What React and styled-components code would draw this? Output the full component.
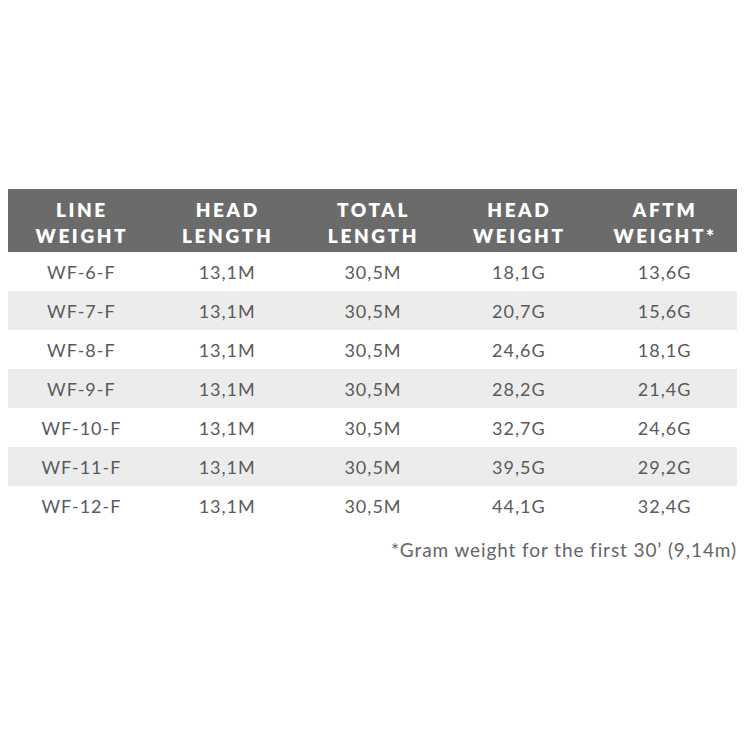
import React from "react";
import styled, { createGlobalStyle } from "styled-components";

const Global = createGlobalStyle`
  html, body { margin: 0; padding: 0; background: #fff; }
  body { font-family: Lato, "Open Sans", sans-serif; }
`;

const Page = styled.div`
  width: 750px;
  height: 750px;
  padding: 189px 0 0 8px;
  box-sizing: border-box;
`;

const Table = styled.div`
  width: 729px;
  display: grid;
  grid-template-columns: repeat(5, 1fr);
`;

const HeadCell = styled.div`
  background: #6b6b6b;
  color: #fff;
  font-weight: 800;
  font-size: 19px;
  line-height: 26px;
  letter-spacing: 2.6px;
  text-align: center;
  padding: 8px 0 3px 2px;
`;

const Cell = styled.div`
  background: ${(p) => (p.$alt ? "#ececec" : "#fff")};
  color: #5a5a5a;
  font-size: 18px;
  letter-spacing: 1px;
  height: 39px;
  display: flex;
  align-items: center;
  justify-content: center;
  padding-left: 1px;
`;

const Note = styled.div`
  width: 729px;
  text-align: right;
  color: #666;
  font-size: 19px;
  letter-spacing: 0.9px;
  padding-top: 13px;
  padding-right: 0;
`;

const headers = [
  ["LINE", "WEIGHT"],
  ["HEAD", "LENGTH"],
  ["TOTAL", "LENGTH"],
  ["HEAD", "WEIGHT"],
  ["AFTM", "WEIGHT*"],
];

const rows = [
  ["WF-6-F", "13,1M", "30,5M", "18,1G", "13,6G"],
  ["WF-7-F", "13,1M", "30,5M", "20,7G", "15,6G"],
  ["WF-8-F", "13,1M", "30,5M", "24,6G", "18,1G"],
  ["WF-9-F", "13,1M", "30,5M", "28,2G", "21,4G"],
  ["WF-10-F", "13,1M", "30,5M", "32,7G", "24,6G"],
  ["WF-11-F", "13,1M", "30,5M", "39,5G", "29,2G"],
  ["WF-12-F", "13,1M", "30,5M", "44,1G", "32,4G"],
];

export default function App() {
  return (
    <Page>
      <Global />
      <Table>
        {headers.map((h, i) => (
          <HeadCell key={i}>
            {h[0]}
            <br />
            {h[1]}
          </HeadCell>
        ))}
        {rows.map((r, ri) =>
          r.map((c, ci) => (
            <Cell key={ri + "-" + ci} $alt={ri % 2 === 1}>
              {c}
            </Cell>
          ))
        )}
      </Table>
      <Note>*Gram weight for the first 30’ (9,14m)</Note>
    </Page>
  );
}
